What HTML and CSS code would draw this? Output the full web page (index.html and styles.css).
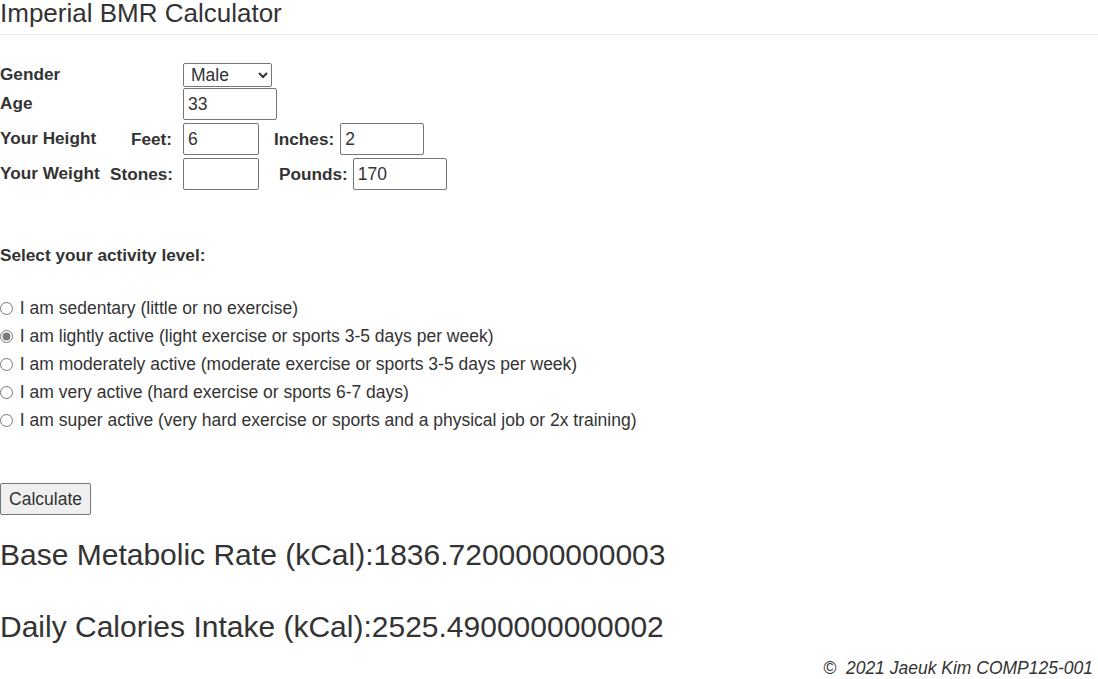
FILE: index.html
```html
<!DOCTYPE html>
<html lang="en">
<head>
<meta charset="utf-8">
<title>Imperial BMR Calculator</title>
<link rel="stylesheet" href="styles.css">
</head>
<body>
<h1 class="title">Imperial BMR Calculator</h1>
<form class="calc">
  <div class="row row-gender">
    <label class="name wide">Gender</label>
    <select class="sel"><option>Male</option><option>Female</option></select>
  </div>
  <div class="row row-age">
    <label class="name wide">Age</label>
    <input class="field w94" type="text" value="33">
  </div>
  <div class="row row-height">
    <span class="name">Your Height</span>
    <label class="unit">Feet:</label>
    <input class="field w76" type="text" value="6">
    <label class="sub sub-in">Inches:</label>
    <input class="field w83" type="text" value="2">
  </div>
  <div class="row row-weight">
    <span class="name">Your Weight</span>
    <label class="unit">Stones:</label>
    <input class="field w76" type="text" value="">
    <label class="sub sub-lb">Pounds:</label>
    <input class="field w94" type="text" value="170">
  </div>

  <p class="activity-title">Select your activity level:</p>

  <div class="radios">
    <label class="opt"><input type="radio" name="act"> I am sedentary (little or no exercise)</label>
    <label class="opt"><input type="radio" name="act" checked> I am lightly active (light exercise or sports 3-5 days per week)</label>
    <label class="opt"><input type="radio" name="act"> I am moderately active (moderate exercise or sports 3-5 days per week)</label>
    <label class="opt"><input type="radio" name="act"> I am very active (hard exercise or sports 6-7 days)</label>
    <label class="opt"><input type="radio" name="act"> I am super active (very hard exercise or sports and a physical job or 2x training)</label>
  </div>

  <button type="button" class="btn">Calculate</button>
</form>

<p class="result result-bmr">Base Metabolic Rate (kCal):1836.7200000000003</p>
<p class="result result-daily">Daily Calories Intake (kCal):2525.4900000000002</p>

<footer class="foot">&copy;&nbsp; 2021 Jaeuk Kim COMP125-001</footer>
</body>
</html>
```
FILE: styles.css
```css
html, body {
  margin: 0;
  padding: 0;
}
body {
  font-family: "Liberation Sans", Arial, sans-serif;
  font-size: 17.5px;
  color: #333;
  background: #fff;
}
.title {
  margin: 0;
  padding: 0 0 7px;
  font-size: 26px;
  font-weight: 400;
  line-height: 27px;
  border-bottom: 1px solid #e5e5e5;
}
.calc {
  margin: 0;
  padding-top: 28px;
}
.row {
  display: flex;
  align-items: center;
  font-weight: 700;
  font-size: 17.2px;
}
.row-age { margin-top: 1px; }
.row-height { margin-top: 3px; }
.row-weight { margin-top: 3px; }
.name {
  width: 110px;
  font-weight: 700;
  position: relative;
  top: -1px;
}
.name.wide { width: 183px; }
.unit {
  width: 62px;
  text-align: right;
  margin-right: 11px;
}
.sub-in { margin: 0 6px 0 15px; }
.sub-lb { margin: 0 5px 0 20px; }
.sel {
  box-sizing: border-box;
  width: 89px;
  height: 24px;
  font-family: "Liberation Sans", Arial, sans-serif;
  font-size: 17.5px;
  color: #333;
  padding: 0 2px 0 3px;
  border: 1px solid #767676;
  border-radius: 2px;
  background: #fff;
}
.field {
  box-sizing: border-box;
  height: 32px;
  font-family: "Liberation Sans", Arial, sans-serif;
  font-size: 17.5px;
  color: #333;
  padding: 1px 4px 0;
  border: 1px solid #767676;
  border-radius: 2px;
  background: #fff;
}
.w76 { width: 76px; }
.w83 { width: 84px; }
.w94 { width: 94px; }
.activity-title {
  margin: 55px 0 0;
  line-height: 20px;
  font-weight: 700;
  font-size: 17.2px;
}
.radios {
  margin-top: 29px;
  display: flex;
  flex-direction: column;
}
.opt {
  line-height: 28px;
  height: 28px;
}
.opt input {
  margin: 0 2px 0 0;
  width: 13px;
  height: 13px;
  vertical-align: -1px;
  accent-color: #7a7a7a;
}
.btn {
  margin-top: 49px;
  box-sizing: border-box;
  width: 91px;
  height: 32px;
  font-family: "Liberation Sans", Arial, sans-serif;
  font-size: 17.5px;
  color: #333;
  background: #efefef;
  border: 1px solid #767676;
  border-radius: 2px;
  padding: 0;
}
.result {
  margin: 0;
  font-size: 30px;
  line-height: 34px;
}
.result-bmr { margin-top: 23px; }
.result-daily { margin-top: 38px; }
.foot {
  margin-top: 14px;
  text-align: right;
  padding-right: 5px;
  font-style: italic;
  line-height: 20px;
}
```
